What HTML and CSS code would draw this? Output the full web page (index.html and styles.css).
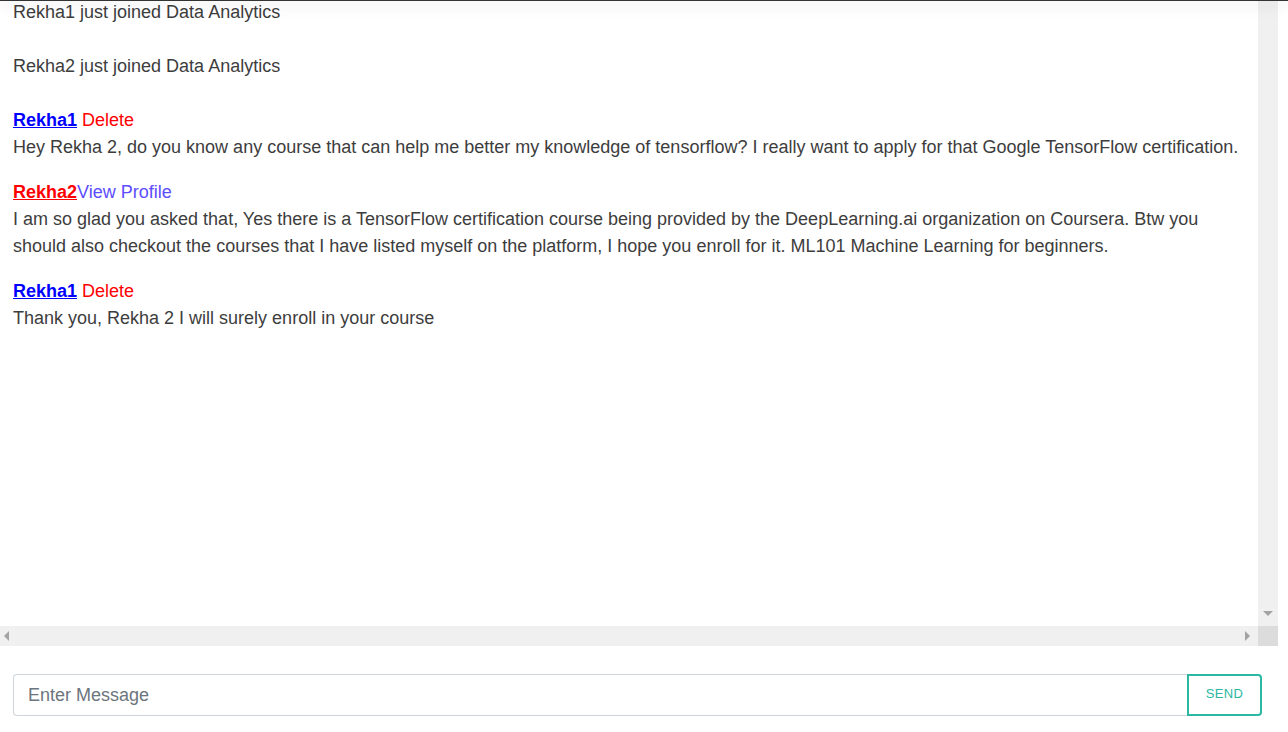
FILE: index.html
```html
<!DOCTYPE html>
<html lang="en">
<head>
<meta charset="utf-8">
<title>Chat</title>
<link rel="stylesheet" href="styles.css">
</head>
<body>
<div class="app">
  <div class="topbar"></div>
  <div class="chat">
    <div class="chat-row">
      <div class="messages">
        <p class="notice first">Rekha1 just joined Data Analytics</p>
        <p class="notice">Rekha2 just joined Data Analytics</p>
        <div class="msg">
          <div class="msg-head"><a class="user me" href="#">Rekha1</a> <span class="delete">Delete</span></div>
          <div class="msg-text">Hey Rekha 2, do you know any course that can help me better my knowledge of tensorflow? I really want to apply for that Google TensorFlow certification.</div>
        </div>
        <div class="msg">
          <div class="msg-head"><a class="user other" href="#">Rekha2</a><span class="profile">View Profile</span></div>
          <div class="msg-text">I am so glad you asked that, Yes there is a TensorFlow certification course being provided by the DeepLearning.ai organization on Coursera. Btw you should also checkout the courses that I have listed myself on the platform, I hope you enroll for it. ML101 Machine Learning for beginners.</div>
        </div>
        <div class="msg">
          <div class="msg-head"><a class="user me" href="#">Rekha1</a> <span class="delete">Delete</span></div>
          <div class="msg-text">Thank you, Rekha 2 I will surely enroll in your course</div>
        </div>
      </div>
      <div class="vbar"><span class="arrow-down"></span></div>
    </div>
    <div class="hbar">
      <div class="htrack"><span class="arrow-left"></span><span class="arrow-right"></span></div>
      <div class="corner"></div>
    </div>
  </div>
  <form class="composer">
    <div class="input-group">
      <input class="msg-input" type="text" placeholder="Enter Message">
      <button class="send" type="button">Send</button>
    </div>
  </form>
</div>
</body>
</html>
```
FILE: styles.css
```css
html, body {
  margin: 0;
  padding: 0;
  background: #ffffff;
}

body {
  font-family: "Liberation Sans", Arial, sans-serif;
  font-size: 18px;
  line-height: 27px;
  color: #3d3d3d;
}

.app {
  width: 1288px;
  height: 732px;
  overflow: hidden;
}

.topbar {
  position: relative;
  z-index: 2;
  height: 1px;
  background: #333333;
  box-shadow: 0 3px 14px rgba(0, 0, 0, 0.42);
}

.chat {
  width: 1278px;
  display: flex;
  flex-direction: column;
}

.chat-row {
  display: flex;
  height: 625px;
}

.messages {
  flex: 1;
  overflow: hidden;
  padding: 0 14px 0 13px;
}

.notice {
  margin: 0 0 27px 0;
}

.notice.first {
  margin-top: -2px;
}

.msg {
  margin-bottom: 18px;
}

.msg-head {
  white-space: nowrap;
}

.user {
  font-weight: bold;
  text-decoration: underline;
}

.user.me {
  color: #0000ff;
}

.user.other {
  color: #ff0000;
}

.delete {
  color: #ff0000;
}

.profile {
  color: #5c4dff;
}

.vbar {
  width: 20px;
  background: #f0f0f0;
  display: flex;
  flex-direction: column;
  justify-content: flex-end;
  align-items: center;
  padding-bottom: 10px;
  box-sizing: border-box;
}

.arrow-down {
  width: 0;
  height: 0;
  border-left: 5px solid transparent;
  border-right: 5px solid transparent;
  border-top: 5px solid #a3a3a3;
}

.hbar {
  display: flex;
  height: 20px;
}

.htrack {
  flex: 1;
  background: #f0f0f0;
  display: flex;
  align-items: center;
  justify-content: space-between;
  padding: 0 8px 0 4px;
}

.arrow-left {
  width: 0;
  height: 0;
  border-top: 5px solid transparent;
  border-bottom: 5px solid transparent;
  border-right: 5px solid #a3a3a3;
}

.arrow-right {
  width: 0;
  height: 0;
  border-top: 5px solid transparent;
  border-bottom: 5px solid transparent;
  border-left: 5px solid #a3a3a3;
}

.corner {
  width: 20px;
  background: #dcdcdc;
}

.composer {
  margin: 0;
  padding: 28px 26px 0 13px;
}

.input-group {
  display: flex;
  height: 42px;
}

.msg-input {
  flex: 1;
  min-width: 0;
  box-sizing: border-box;
  height: 42px;
  border: 1px solid #ced4da;
  border-right: none;
  border-radius: 4px 0 0 4px;
  padding: 0 14px;
  font-family: "Liberation Sans", Arial, sans-serif;
  font-size: 18px;
  color: #495057;
  outline: none;
}

.msg-input::placeholder {
  color: #6c757d;
}

.send {
  width: 75px;
  height: 42px;
  box-sizing: border-box;
  border: 2px solid #2bb8a3;
  border-radius: 0 4px 4px 0;
  background: #ffffff;
  color: #2bb8a3;
  font-family: "Liberation Sans", Arial, sans-serif;
  font-size: 13px;
  text-transform: uppercase;
  letter-spacing: 0.3px;
  padding: 0;
  padding-bottom: 4px;
}
```
